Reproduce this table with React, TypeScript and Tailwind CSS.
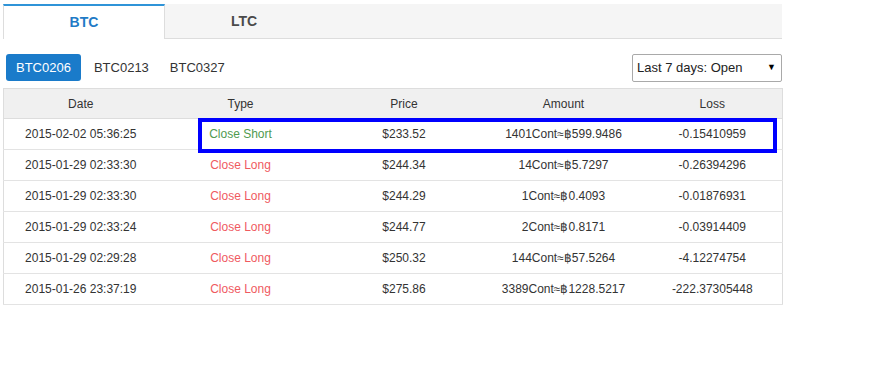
import React from "react";

const rows = [
  { date: "2015-02-02 05:36:25", type: "Close Short", price: "$233.52", amount: "1401Cont≈฿599.9486", loss: "-0.15410959" },
  { date: "2015-01-29 02:33:30", type: "Close Long", price: "$244.34", amount: "14Cont≈฿5.7297", loss: "-0.26394296" },
  { date: "2015-01-29 02:33:30", type: "Close Long", price: "$244.29", amount: "1Cont≈฿0.4093", loss: "-0.01876931" },
  { date: "2015-01-29 02:33:24", type: "Close Long", price: "$244.77", amount: "2Cont≈฿0.8171", loss: "-0.03914409" },
  { date: "2015-01-29 02:29:28", type: "Close Long", price: "$250.32", amount: "144Cont≈฿57.5264", loss: "-4.12274754" },
  { date: "2015-01-26 23:37:19", type: "Close Long", price: "$275.86", amount: "3389Cont≈฿1228.5217", loss: "-222.37305448" },
];

export default function App() {
  return (
    <div className="bg-white w-[886px] h-[369px] pl-[3px] pt-[4px]" style={{ fontFamily: '"Liberation Sans", Arial, sans-serif' }}>
      <div className="w-[779px]">
        <div className="flex h-[35px] bg-[#f5f5f5] border-b border-[#dddddd]">
          <div className="w-[162px] h-[35px] bg-white border-t-2 border-t-[#2f94d8] border-l border-r border-[#dddddd] flex items-center justify-center text-[14px] font-bold text-[#1f7bc6]">
            BTC
          </div>
          <div className="w-[158px] flex items-center justify-center text-[14px] font-bold text-[#4a4a4a]">LTC</div>
        </div>
        <div className="mt-[15px] flex justify-between items-start">
          <div className="flex items-center text-[13px] text-[#333333]">
            <div className="ml-[3px] h-[27px] px-[10px] flex items-center rounded-[3px] bg-[#1a7bca] text-white">BTC0206</div>
            <div className="ml-[3px] pl-[10px] pr-[9px]">BTC0213</div>
            <div className="ml-[3px] px-[9px]">BTC0327</div>
          </div>
          <div className="w-[150px] h-[28px] border border-[#a9a9a9] rounded-[2px] flex items-center justify-between pl-[4px] pr-[5px] text-[13px] text-[#222222]">
            <span>Last 7 days: Open</span>
            <span className="text-[9px] text-black">▼</span>
          </div>
        </div>
        <div className="relative mt-[6px]">
          <table className="w-[779px] border-collapse border border-[#dddddd] text-[12px] text-[#333333] table-fixed">
            <colgroup>
              <col className="w-[154px]" />
              <col className="w-[166px]" />
              <col className="w-[161px]" />
              <col className="w-[158px]" />
              <col className="w-[140px]" />
            </colgroup>
            <thead>
              <tr className="bg-[#f0f0f0] h-[30px] border-b border-[#dddddd]">
                <th className="font-normal text-center">Date</th>
                <th className="font-normal text-center">Type</th>
                <th className="font-normal text-center">Price</th>
                <th className="font-normal text-center">Amount</th>
                <th className="font-normal text-center">Loss</th>
              </tr>
            </thead>
            <tbody>
              {rows.map((r, i) => (
                <tr key={i} className="h-[31px] border-b border-[#e3e3e3]">
                  <td className="text-center">{r.date}</td>
                  <td className={`text-center ${r.type === "Close Short" ? "text-[#4f9a4f]" : "text-[#ef5a5f]"}`}>{r.type}</td>
                  <td className="text-center">{r.price}</td>
                  <td className="text-center">{r.amount}</td>
                  <td className="text-center">{r.loss}</td>
                </tr>
              ))}
            </tbody>
          </table>
          <div className="absolute left-[195px] top-[30px] w-[579px] h-[35px] border-4 border-[#0000ff]" />
        </div>
      </div>
    </div>
  );
}
